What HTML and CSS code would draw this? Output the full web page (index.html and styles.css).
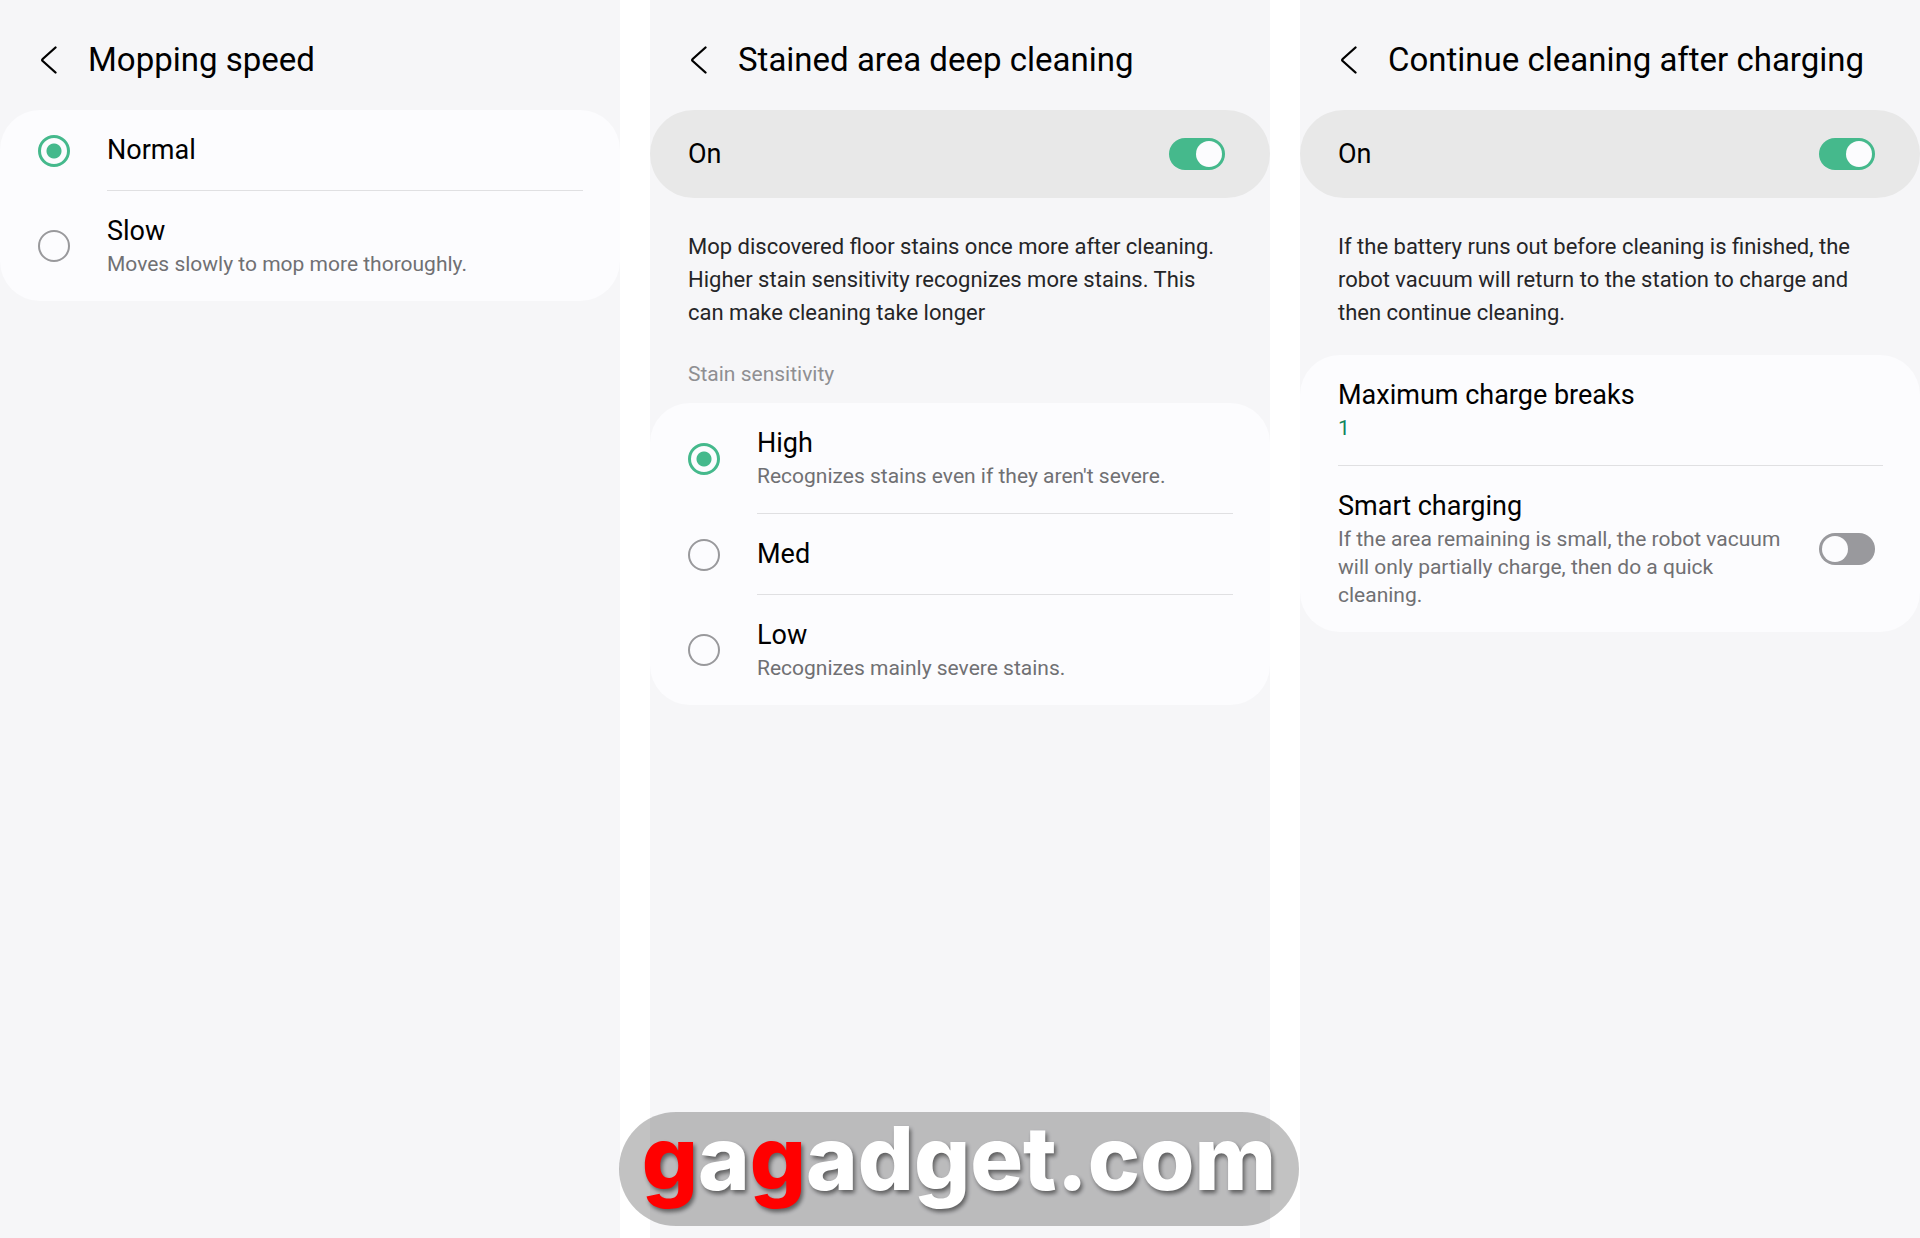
FILE: index.html
```html
<!DOCTYPE html>
<html lang="en">
<head>
<meta charset="utf-8">
<meta name="viewport" content="width=device-width, initial-scale=1">
<title>Robot vacuum settings</title>
<link rel="stylesheet" href="styles.css">
</head>
<body>
<main class="screens">
  <section class="screen">
    <header class="bar">
      <button class="back" type="button" aria-label="Back"><svg class="chevron" viewBox="0 0 18 28" aria-hidden="true"><path d="M15.500 1.500 2.700 13Q1.700 14 2.700 15L15.500 26.500"/></svg></button>
      <h1 class="title">Mopping speed</h1>
    </header>
    <div class="card">
      <div class="row">
        <input class="radio" type="radio" name="speed" id="speed-normal" checked>
        <label class="text" for="speed-normal"><span class="name">Normal</span></label>
      </div>
      <div class="row">
        <input class="radio" type="radio" name="speed" id="speed-slow">
        <label class="text" for="speed-slow"><span class="name">Slow</span><span class="note">Moves slowly to mop more thoroughly.</span></label>
      </div>
    </div>
  </section>

  <section class="screen">
    <header class="bar">
      <button class="back" type="button" aria-label="Back"><svg class="chevron" viewBox="0 0 18 28" aria-hidden="true"><path d="M15.500 1.500 2.700 13Q1.700 14 2.700 15L15.500 26.500"/></svg></button>
      <h1 class="title">Stained area deep cleaning</h1>
    </header>
    <div class="master">
      <label class="name" for="deep-on">On</label>
      <input class="switch" type="checkbox" role="switch" id="deep-on" checked>
    </div>
    <p class="about">Mop discovered floor stains once more after cleaning. Higher stain sensitivity recognizes more stains. This can make cleaning take longer</p>
    <h2 class="group">Stain sensitivity</h2>
    <div class="card">
      <div class="row">
        <input class="radio" type="radio" name="stain" id="stain-high" checked>
        <label class="text" for="stain-high"><span class="name">High</span><span class="note">Recognizes stains even if they aren't severe.</span></label>
      </div>
      <div class="row">
        <input class="radio" type="radio" name="stain" id="stain-med">
        <label class="text" for="stain-med"><span class="name">Med</span></label>
      </div>
      <div class="row">
        <input class="radio" type="radio" name="stain" id="stain-low">
        <label class="text" for="stain-low"><span class="name">Low</span><span class="note">Recognizes mainly severe stains.</span></label>
      </div>
    </div>
  </section>

  <section class="screen">
    <header class="bar">
      <button class="back" type="button" aria-label="Back"><svg class="chevron" viewBox="0 0 18 28" aria-hidden="true"><path d="M15.500 1.500 2.700 13Q1.700 14 2.700 15L15.500 26.500"/></svg></button>
      <h1 class="title">Continue cleaning after charging</h1>
    </header>
    <div class="master">
      <label class="name" for="resume-on">On</label>
      <input class="switch" type="checkbox" role="switch" id="resume-on" checked>
    </div>
    <p class="about">If the battery runs out before cleaning is finished, the robot vacuum will return to the station to charge and then continue cleaning.</p>
    <div class="card">
      <div class="row">
        <button class="text" type="button"><span class="name">Maximum charge breaks</span><span class="note value">1</span></button>
      </div>
      <div class="row with-switch">
        <label class="text" for="smart"><span class="name">Smart charging</span><span class="note">If the area remaining is small, the robot vacuum will only partially charge, then do a quick cleaning.</span></label>
        <input class="switch" type="checkbox" role="switch" id="smart">
      </div>
    </div>
  </section>
</main>
<div class="watermark"><span><b>g</b>a<b>g</b>adget.com</span></div>
</body>
</html>
```
FILE: styles.css
```css
* { box-sizing: border-box; }

body {
  margin: 0;
  background: #fff;
  color: #000;
  font-family: Roboto, "Liberation Sans", sans-serif;
}

button {
  border: 0;
  padding: 0;
  background: none;
  color: inherit;
  font: inherit;
  text-align: left;
}

.screens {
  display: grid;
  grid-template-columns: repeat(3, 1fr);
  gap: 30px;
  min-height: 100vh;
}

.screen { background: #f6f6f8; }

.bar {
  display: flex;
  align-items: center;
  height: 110px;
  padding: 10px 38px 0;
}

.back {
  display: flex;
  width: 50px;
  padding-left: 2px;
}

.chevron {
  width: 18px;
  height: 28px;
  fill: none;
  stroke: #000;
  stroke-width: 2.3;
  stroke-linecap: round;
}

.title {
  margin: 0;
  font-size: 33px;
  font-weight: 400;
  line-height: 40px;
  white-space: nowrap;
}

.card {
  border-radius: 40px;
  background: #fcfcfe;
}

.master {
  display: flex;
  align-items: center;
  justify-content: space-between;
  height: 88px;
  padding: 0 45px 0 38px;
  border-radius: 44px;
  background: #e8e8e8;
}

.row {
  display: flex;
  align-items: center;
  padding: 0 37px 0 38px;
}

.text {
  display: flex;
  flex: 1;
  flex-direction: column;
  gap: 2px;
  padding: 23px 0;
}

.row:not(:last-child) .text { border-bottom: 1px solid #e0e0e2; }

.name {
  font-size: 27px;
  line-height: 34px;
}

.note {
  color: #707073;
  font-size: 21px;
  line-height: 28px;
}

.value { color: #12855c; }

.row.with-switch {
  gap: 36px;
  padding-right: 45px;
}

.about {
  margin: 0;
  padding: 32px 45px 26px 38px;
  color: #252527;
  font-size: 22px;
  line-height: 33px;
}

.group {
  margin: 0;
  padding: 5px 38px 15px;
  color: #8f8f92;
  font-size: 21px;
  font-weight: 400;
  line-height: 28px;
}

.radio {
  appearance: none;
  flex: none;
  width: 32px;
  height: 32px;
  margin: 0 37px 0 0;
  border: 2px solid #99999c;
  border-radius: 50%;
}

.radio:checked {
  border: 3px solid #45b98c;
  background: radial-gradient(circle, #45b98c 7px, transparent 8px);
}

.switch {
  appearance: none;
  display: flex;
  flex: none;
  align-items: center;
  width: 56px;
  height: 32px;
  margin: 0;
  padding: 0 3px;
  border-radius: 16px;
  background: #99999d;
}

.switch::before {
  content: "";
  width: 26px;
  height: 26px;
  border-radius: 50%;
  background: #fcfcfe;
}

.switch:checked {
  justify-content: flex-end;
  background: #45b98c;
}

.watermark {
  position: fixed;
  bottom: 12px;
  left: 50%;
  display: flex;
  justify-content: center;
  width: 680px;
  margin-left: -341px;
  padding-bottom: 22px;
  border-radius: 57px;
  background: rgba(0, 0, 0, 0.24);
  color: #fff;
  font: 800 88px/92px Inter, "Open Sans", sans-serif;
  text-shadow: 2px 3px 4px rgba(0, 0, 0, 0.5);
}

.watermark b {
  color: #f00;
  font-weight: inherit;
}
```
